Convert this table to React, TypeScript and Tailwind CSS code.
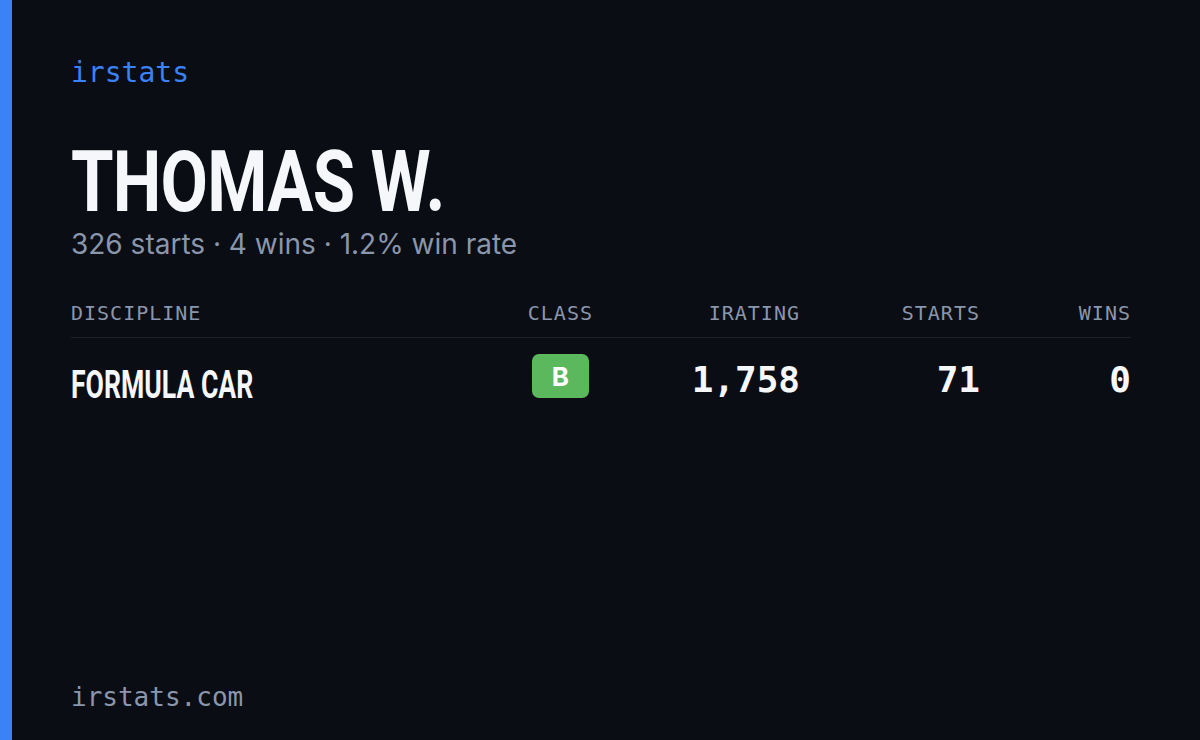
import React from "react";

const mono = "font-['DejaVu_Sans_Mono','Liberation_Mono',monospace]";
const narrow = "font-['Roboto','Liberation_Sans',sans-serif]";

type Row = {
    discipline: string;
    license: string;
    irating: string;
    starts: string;
    wins: string;
};

const rows: Row[] = [
    { discipline: "FORMULA CAR", license: "B", irating: "1,758", starts: "71", wins: "0" },
];

const head = `${mono} border-b border-[#1c202b] pb-[14px] text-[20px] leading-none tracking-[1px] text-[#8a96ab]`;
const num = `${mono} pt-[24px] text-right text-[36px] font-bold leading-none text-[#f5f7fb]`;

export default function App() {
    return (
        <div className="flex h-[740px] w-[1200px] overflow-hidden bg-[#0a0d14]">
            <div className="w-3 shrink-0 bg-[#3b82f6]" />

            <div className="flex flex-1 flex-col pl-[59px] pr-[69px] pt-[59px] pb-[30px]">
                <div className={`${mono} text-[28px] leading-none text-[#3b82f6]`}>irstats</div>

                <h1 className={`${narrow} mt-[52px] origin-left scale-x-[0.8] whitespace-nowrap text-[86px] font-bold leading-none tracking-[-1px] text-[#f5f7fb]`}>
                    THOMAS W.
                </h1>
                <p className="mt-[5px] font-['Inter',sans-serif] text-[28px] leading-none text-[#8a96ab]">
                    326 starts · 4 wins · 1.2% win rate
                </p>

                <div className="mt-[45px] grid grid-cols-[1fr_auto_207px_180px_151px]">
                    <div className={head}>DISCIPLINE</div>
                    <div className={`${head} text-center`}>CLASS</div>
                    <div className={`${head} text-right`}>IRATING</div>
                    <div className={`${head} text-right`}>STARTS</div>
                    <div className={`${head} text-right`}>WINS</div>

                    {rows.map(r => (
                        <React.Fragment key={r.discipline}>
                            <div className="flex items-end pt-[28px]">
                                <span className={`${narrow} origin-left scale-x-[0.7] whitespace-nowrap text-[38px] font-bold leading-none text-[#f5f7fb]`}>{r.discipline}</span>
                            </div>
                            <div className="flex justify-center pt-[16px]">
                                <span className="flex h-[44px] w-[57px] items-center justify-center rounded-[7px] bg-[#5cb85c] font-['Inter',sans-serif] text-[26px] font-bold text-white">{r.license}</span>
                            </div>
                            <div className={num}>{r.irating}</div>
                            <div className={num}>{r.starts}</div>
                            <div className={num}>{r.wins}</div>
                        </React.Fragment>
                    ))}
                </div>

                <div className={`${mono} mt-auto text-[26px] leading-none text-[#8a96ab]`}>irstats.com</div>
            </div>
        </div>
    );
}
